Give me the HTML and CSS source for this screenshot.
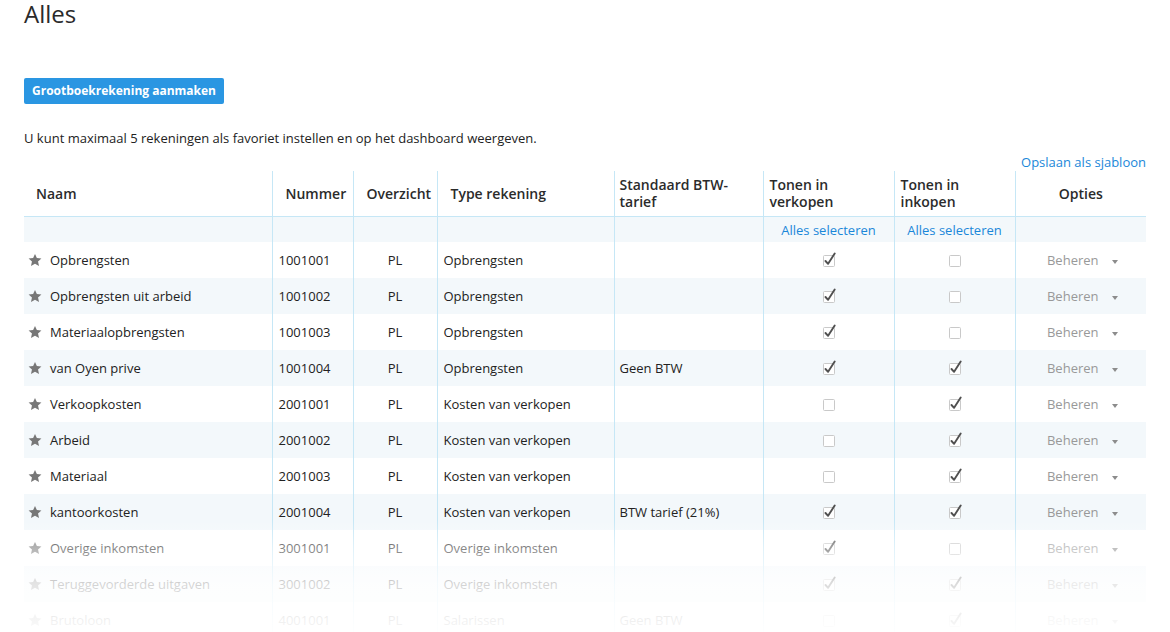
FILE: index.html
```html
<!DOCTYPE html>
<html lang="nl">
<head>
<meta charset="utf-8">
<title>Alles</title>
<link rel="stylesheet" href="styles.css">
</head>
<body>
<div class="page">
  <h1 class="title">Alles</h1>
  <button class="btn-primary">Grootboekrekening aanmaken</button>
  <p class="intro">U kunt maximaal 5 rekeningen als favoriet instellen en op het dashboard weergeven.</p>
  <div class="toolbar"><a class="link" href="#">Opslaan als sjabloon</a></div>
  <table class="accounts">
    <colgroup>
      <col class="c-name"><col class="c-num"><col class="c-ov"><col class="c-type"><col class="c-btw"><col class="c-sell"><col class="c-buy"><col class="c-opt">
    </colgroup>
    <thead>
      <tr class="head">
        <th class="h-name">Naam</th>
        <th class="h-pad">Nummer</th>
        <th class="h-pad">Overzicht</th>
        <th class="h-pad">Type rekening</th>
        <th class="h-tight">Standaard BTW-<br>tarief</th>
        <th class="h-tight2">Tonen in<br>verkopen</th>
        <th class="h-tight2">Tonen in<br>inkopen</th>
        <th class="h-center">Opties</th>
      </tr>
      <tr class="filter">
        <td></td><td></td><td></td><td></td><td></td>
        <td class="center"><a class="link" href="#">Alles selecteren</a></td>
        <td class="center"><a class="link" href="#">Alles selecteren</a></td>
        <td></td>
      </tr>
    </thead>
    <tbody id="rows"></tbody>
  </table>
  <div class="fade"></div>
</div>
<script src="app.js"></script>
</body>
</html>
```

FILE: app.js
```js
const data = [
  ["Opbrengsten","1001001","Opbrengsten","",1,0],
  ["Opbrengsten uit arbeid","1001002","Opbrengsten","",1,0],
  ["Materiaalopbrengsten","1001003","Opbrengsten","",1,0],
  ["van Oyen prive","1001004","Opbrengsten","Geen BTW",1,1],
  ["Verkoopkosten","2001001","Kosten van verkopen","",0,1],
  ["Arbeid","2001002","Kosten van verkopen","",0,1],
  ["Materiaal","2001003","Kosten van verkopen","",0,1],
  ["kantoorkosten","2001004","Kosten van verkopen","BTW tarief (21%)",1,1],
  ["Overige inkomsten","3001001","Overige inkomsten","",1,0],
  ["Teruggevorderde uitgaven","3001002","Overige inkomsten","",1,1],
  ["Brutoloon","4001001","Salarissen","Geen BTW",0,1]
];
const star = '<svg class="star" width="14" height="14" viewBox="0 0 24 24"><path d="M12 1.5l3.2 7.1 7.8.8-5.8 5.2 1.7 7.7L12 18.3l-6.9 4 1.7-7.7L1 9.4l7.8-.8z"/></svg>';
function box(checked) {
  return '<svg class="cb" width="16" height="16" viewBox="0 0 16 16"><rect x="2.5" y="3.5" width="11" height="11" rx="1" fill="#fff" stroke="#c9c9c9"/>' +
    (checked ? '<path d="M4.5 9l2.6 2.8 6.6-10.3" fill="none" stroke="#505050" stroke-width="1.9" stroke-linecap="round" stroke-linejoin="round"/>' : '') + '</svg>';
}
const tbody = document.getElementById('rows');
tbody.innerHTML = data.map(r =>
  '<tr>' +
  '<td class="name">' + star + '<span>' + r[0] + '</span></td>' +
  '<td class="pad">' + r[1] + '</td>' +
  '<td class="center">PL</td>' +
  '<td class="pad">' + r[2] + '</td>' +
  '<td class="btw">' + r[3] + '</td>' +
  '<td class="center">' + box(r[4]) + '</td>' +
  '<td class="center">' + box(r[5]) + '</td>' +
  '<td class="center"><span class="manage">Beheren<i class="caret"></i></span></td>' +
  '</tr>').join('');
```

FILE: styles.css
```css
html, body {
  margin: 0;
  padding: 0;
  overflow: hidden;
  background: #fff;
}
body {
  font-family: "Open Sans", "DejaVu Sans", sans-serif;
  color: #222;
  font-size: 13px;
}
.page {
  position: relative;
  padding: 0 24px;
  height: 632px;
}
.title {
  margin: 0;
  font-size: 24px;
  line-height: 27px;
  font-weight: 400;
  color: #2a2a2a;
}
.btn-primary {
  display: block;
  margin-top: 51px;
  width: 200px;
  height: 26px;
  padding: 0;
  border: 0;
  border-radius: 2px;
  background: #2a96e2;
  color: #fff;
  font-family: "Open Sans", sans-serif;
  font-weight: 700;
  font-size: 12px;
  line-height: 26px;
}
.intro {
  margin: 25px 0 0;
  line-height: 18px;
}
.toolbar {
  text-align: right;
  margin-top: 6px;
  line-height: 18px;
}
.link {
  color: #1a87d9;
  text-decoration: none;
}
.accounts {
  width: 1122px;
  border-collapse: collapse;
  table-layout: fixed;
  margin-top: 0;
}
.c-name { width: 248px; }
.c-num { width: 81px; }
.c-ov { width: 84px; }
.c-type { width: 177px; }
.c-btw { width: 149px; }
.c-sell { width: 131px; }
.c-buy { width: 121px; }
.c-opt { width: 131px; }
.accounts th, .accounts td {
  border-left: 1px solid #c6e7f6;
  padding: 0;
  vertical-align: middle;
}
.accounts th:first-child, .accounts td:first-child {
  border-left: 0;
}
.accounts .head th {
  font-size: 14px;
  font-weight: 600;
  color: #2b2b2b;
  line-height: 17px;
  text-align: left;
  height: 34px;
  padding-top: 5px;
  padding-bottom: 6px;
  border-bottom: 1px solid #c6e7f6;
}
.accounts .head .h-name { padding-left: 12px; }
.accounts .head .h-pad { padding-left: 13px; }
.accounts .head .h-tight { padding-left: 5px; }
.accounts .head .h-tight2 { padding-left: 6px; }
.accounts .head .h-center { text-align: center; }
.accounts .filter td {
  background: #f3f8fb;
  height: 24px;
  text-align: center;
  line-height: 18px;
  padding-top: 1px;
}
.accounts tbody td {
  height: 36px;
}
.accounts tbody tr:nth-child(even) td {
  background: #f3f8fb;
}
.accounts td.name {
  padding-left: 4px;
  white-space: nowrap;
}
.name .star {
  fill: #777;
  vertical-align: -2px;
  margin-right: 8px;
}
.accounts td.pad { padding-left: 6px; }
.accounts td.btw { padding-left: 5px; }
.accounts td.center { text-align: center; }
.cb {
  display: inline-block;
  vertical-align: -3px;
}
.manage {
  color: #999;
  padding-left: 3px;
}
.caret {
  display: inline-block;
  width: 0;
  height: 0;
  border-left: 3px solid transparent;
  border-right: 3px solid transparent;
  border-top: 4px solid #8c8c8c;
  margin-left: 13px;
  vertical-align: 1px;
}
.fade {
  position: absolute;
  left: 0;
  right: 0;
  top: 520px;
  height: 112px;
  background: linear-gradient(to bottom,
    rgba(255,255,255,0) 0%,
    rgba(255,255,255,0.45) 25%,
    rgba(255,255,255,0.8) 57%,
    rgba(255,255,255,0.93) 89%,
    rgba(255,255,255,0.96) 100%);
  pointer-events: none;
}
```
